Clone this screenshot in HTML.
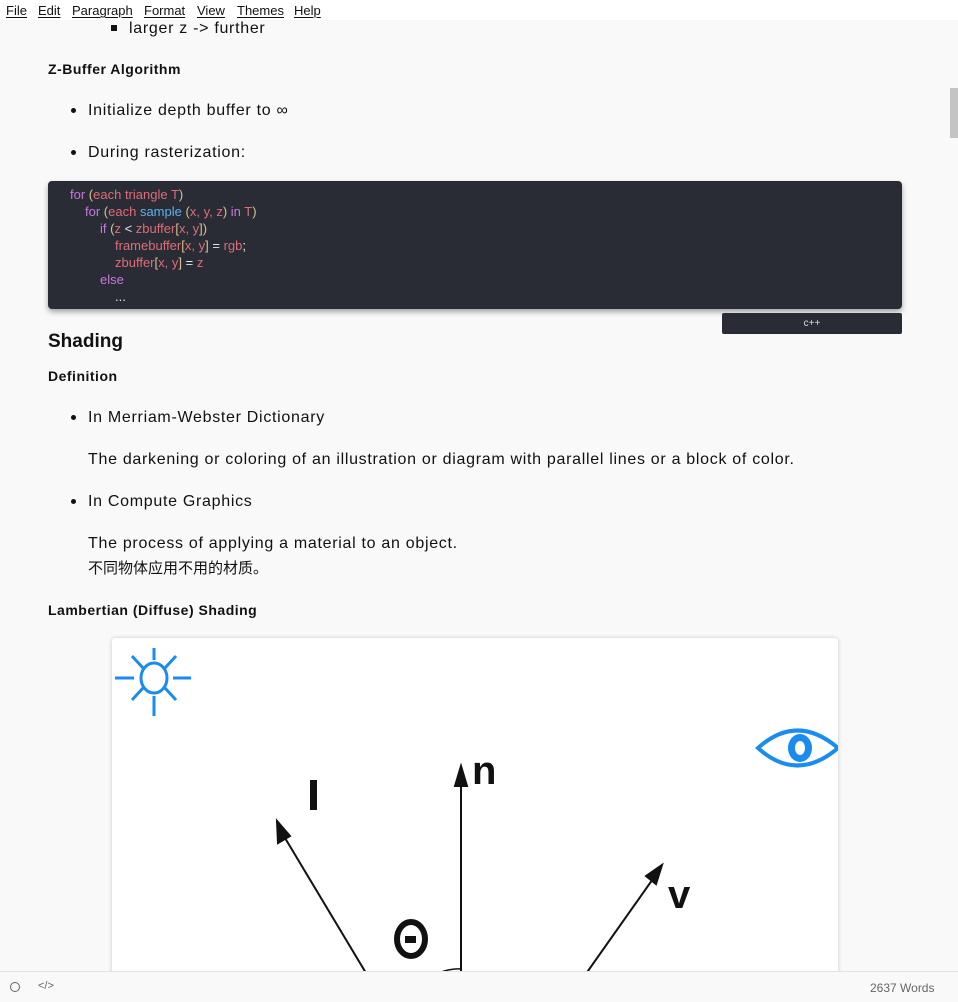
<!DOCTYPE html>
<html><head><meta charset="utf-8"><style>
body{margin:0;width:958px;height:1001px;background:#f9f9f9;overflow:hidden;position:relative;font-family:"Liberation Sans","Noto Sans CJK SC",sans-serif;color:#111}
.a{position:absolute;white-space:nowrap}
.t{font-size:16px;line-height:20px;letter-spacing:0.7px;top:1px}
.h{font-size:14px;font-weight:bold;line-height:18px;letter-spacing:0.5px}
.dot{position:absolute;width:5px;height:5px;border-radius:50%;background:#111}
#menu{position:absolute;left:0;top:0;width:958px;height:20px;background:#fff;font-size:13px;line-height:21px}
#menu span{position:absolute;text-decoration:underline;text-decoration-thickness:1px;text-underline-offset:2px}
#code{position:absolute;left:48px;top:181px;width:854px;height:128px;background:#292c35;border-radius:4px;box-shadow:0 3px 6px rgba(0,0,0,.35);font-size:13px;line-height:17px;color:#e06c75}
#code div{position:absolute;white-space:pre}
.k{color:#c678dd}.b{color:#61afef}.w{color:#e6e6e6}.y{color:#d8c38a}
#lang{position:absolute;left:722px;top:313px;width:180px;height:21px;background:#292c35;border-radius:2px;color:#ddd;font-size:10px;text-align:center;line-height:21px}
#img{position:absolute;left:112px;top:638px;width:726px;height:340px;background:#fff;border-radius:3px;box-shadow:0 0 4px rgba(0,0,0,.2);overflow:hidden}
#foot{position:absolute;left:0;top:971px;width:958px;height:30px;background:#f9f9f9;border-top:1px solid #e2e2e2}
</style></head><body>
<div id="menu"><span style="left:6px">File</span><span style="left:38px">Edit</span><span style="left:72px">Paragraph</span><span style="left:144px">Format</span><span style="left:197px">View</span><span style="left:237px">Themes</span><span style="left:294px">Help</span></div>
<div style="position:absolute;left:950px;top:88px;width:8px;height:50px;background:#c4c4c4"></div>

<div style="position:absolute;left:111px;top:25px;width:6px;height:6px;background:#111"></div>
<div class="a t" style="left:129px;top:19px">larger z -&gt; further</div>
<div class="a h" style="left:48px;top:60px">Z-Buffer Algorithm</div>
<div class="dot" style="left:71px;top:108px"></div>
<div class="a t" style="left:88px;top:101px">Initialize depth buffer to ∞</div>
<div class="dot" style="left:71px;top:150px"></div>
<div class="a t" style="left:88px;top:143px">During rasterization:</div>

<div id="code">
<div style="left:22px;top:5px"><span class="k">for</span> <span class="y">(</span>each triangle T<span class="y">)</span></div>
<div style="left:37px;top:22px"><span class="k">for</span> <span class="y">(</span>each <span class="b">sample</span> <span class="y">(</span>x, y, z<span class="y">)</span> <span class="k">in</span> T<span class="y">)</span></div>
<div style="left:52px;top:39px"><span class="k">if</span> <span class="y">(</span>z <span class="w">&lt;</span> zbuffer<span class="y">[</span>x, y<span class="y">])</span></div>
<div style="left:67px;top:56px">framebuffer<span class="y">[</span>x, y<span class="y">]</span> <span class="w">=</span> rgb<span class="w">;</span></div>
<div style="left:67px;top:73px">zbuffer<span class="y">[</span>x, y<span class="y">]</span> <span class="w">=</span> z</div>
<div style="left:52px;top:90px"><span class="k">else</span></div>
<div style="left:67px;top:107px" class="w">...</div>
</div>
<div id="lang">c++</div>

<div class="a" style="left:48px;top:331px;font-size:19px;font-weight:bold;line-height:22px">Shading</div>
<div class="a h" style="left:48px;top:367px">Definition</div>
<div class="dot" style="left:71px;top:415px"></div>
<div class="a t" style="left:88px;top:408px">In Merriam-Webster Dictionary</div>
<div class="a t" style="left:88px;top:450px">The darkening or coloring of an illustration or diagram with parallel lines or a block of color.</div>
<div class="dot" style="left:71px;top:499px"></div>
<div class="a t" style="left:88px;top:492px">In Compute Graphics</div>
<div class="a t" style="left:88px;top:534px">The process of applying a material to an object.</div>
<div class="a" style="left:88px;top:560px;font-size:15px;line-height:18px">不同物体应用不用的材质。</div>
<div class="a h" style="left:48px;top:601px">Lambertian (Diffuse) Shading</div>

<div id="img"><svg width="726" height="340" viewBox="0 0 726 340">
<g stroke="#1a8cf0" stroke-width="3" fill="none">
<ellipse cx="42" cy="40" rx="13" ry="15"/>
<line x1="42" y1="10" x2="42" y2="22"/><line x1="42" y1="58" x2="42" y2="78"/>
<line x1="3" y1="40" x2="22" y2="40"/><line x1="61" y1="40" x2="79" y2="40"/>
<line x1="20" y1="18" x2="31" y2="30"/><line x1="53" y1="50" x2="64" y2="62"/>
<line x1="64" y1="18" x2="53" y2="30"/><line x1="31" y1="50" x2="20" y2="62"/>
<path d="M646 110 Q685 75 726 110 Q685 145 646 110Z" stroke-width="4"/>
</g>
<ellipse cx="688" cy="110" rx="12" ry="14" fill="#1a8cf0"/>
<ellipse cx="688" cy="110" rx="5" ry="7" fill="#fff"/>
<g stroke="#111" stroke-width="2" fill="#111">
<line x1="349" y1="340" x2="349" y2="140"/>
<path d="M349 128 L343 148 L355 148Z"/>
<line x1="257" y1="340" x2="170" y2="195"/>
<path d="M165 183 L166 205 L178 198Z"/>
<line x1="471" y1="340" x2="543" y2="238"/>
<path d="M550 227 L534 238 L544 246Z"/>
</g>
<path d="M320 338 Q336 330 349 331" stroke="#111" stroke-width="1.5" fill="none"/>
<text x="360" y="146" font-size="40" font-weight="bold" font-family="Liberation Sans Narrow, Liberation Sans" fill="#111">n</text>
<rect x="198" y="142" width="7" height="30" fill="#111"/>
<text x="556" y="270" font-size="40" font-weight="bold" font-family="Liberation Sans Narrow, Liberation Sans" fill="#111">v</text>
<ellipse cx="299" cy="301" rx="14" ry="17" stroke="#111" stroke-width="6" fill="none"/>
<rect x="293" y="298" width="11" height="7" fill="#111"/>
</svg></div>

<div id="foot">
<svg style="position:absolute;left:9px;top:9px" width="12" height="12"><circle cx="6" cy="6" r="4.5" stroke="#666" fill="none"/></svg>
<div class="a" style="left:38px;top:8px;font-size:11px;color:#666">&lt;/&gt;</div>
<div class="a" style="left:870px;top:9px;font-size:12px;color:#666">2637 Words</div>
</div>
</body></html>
